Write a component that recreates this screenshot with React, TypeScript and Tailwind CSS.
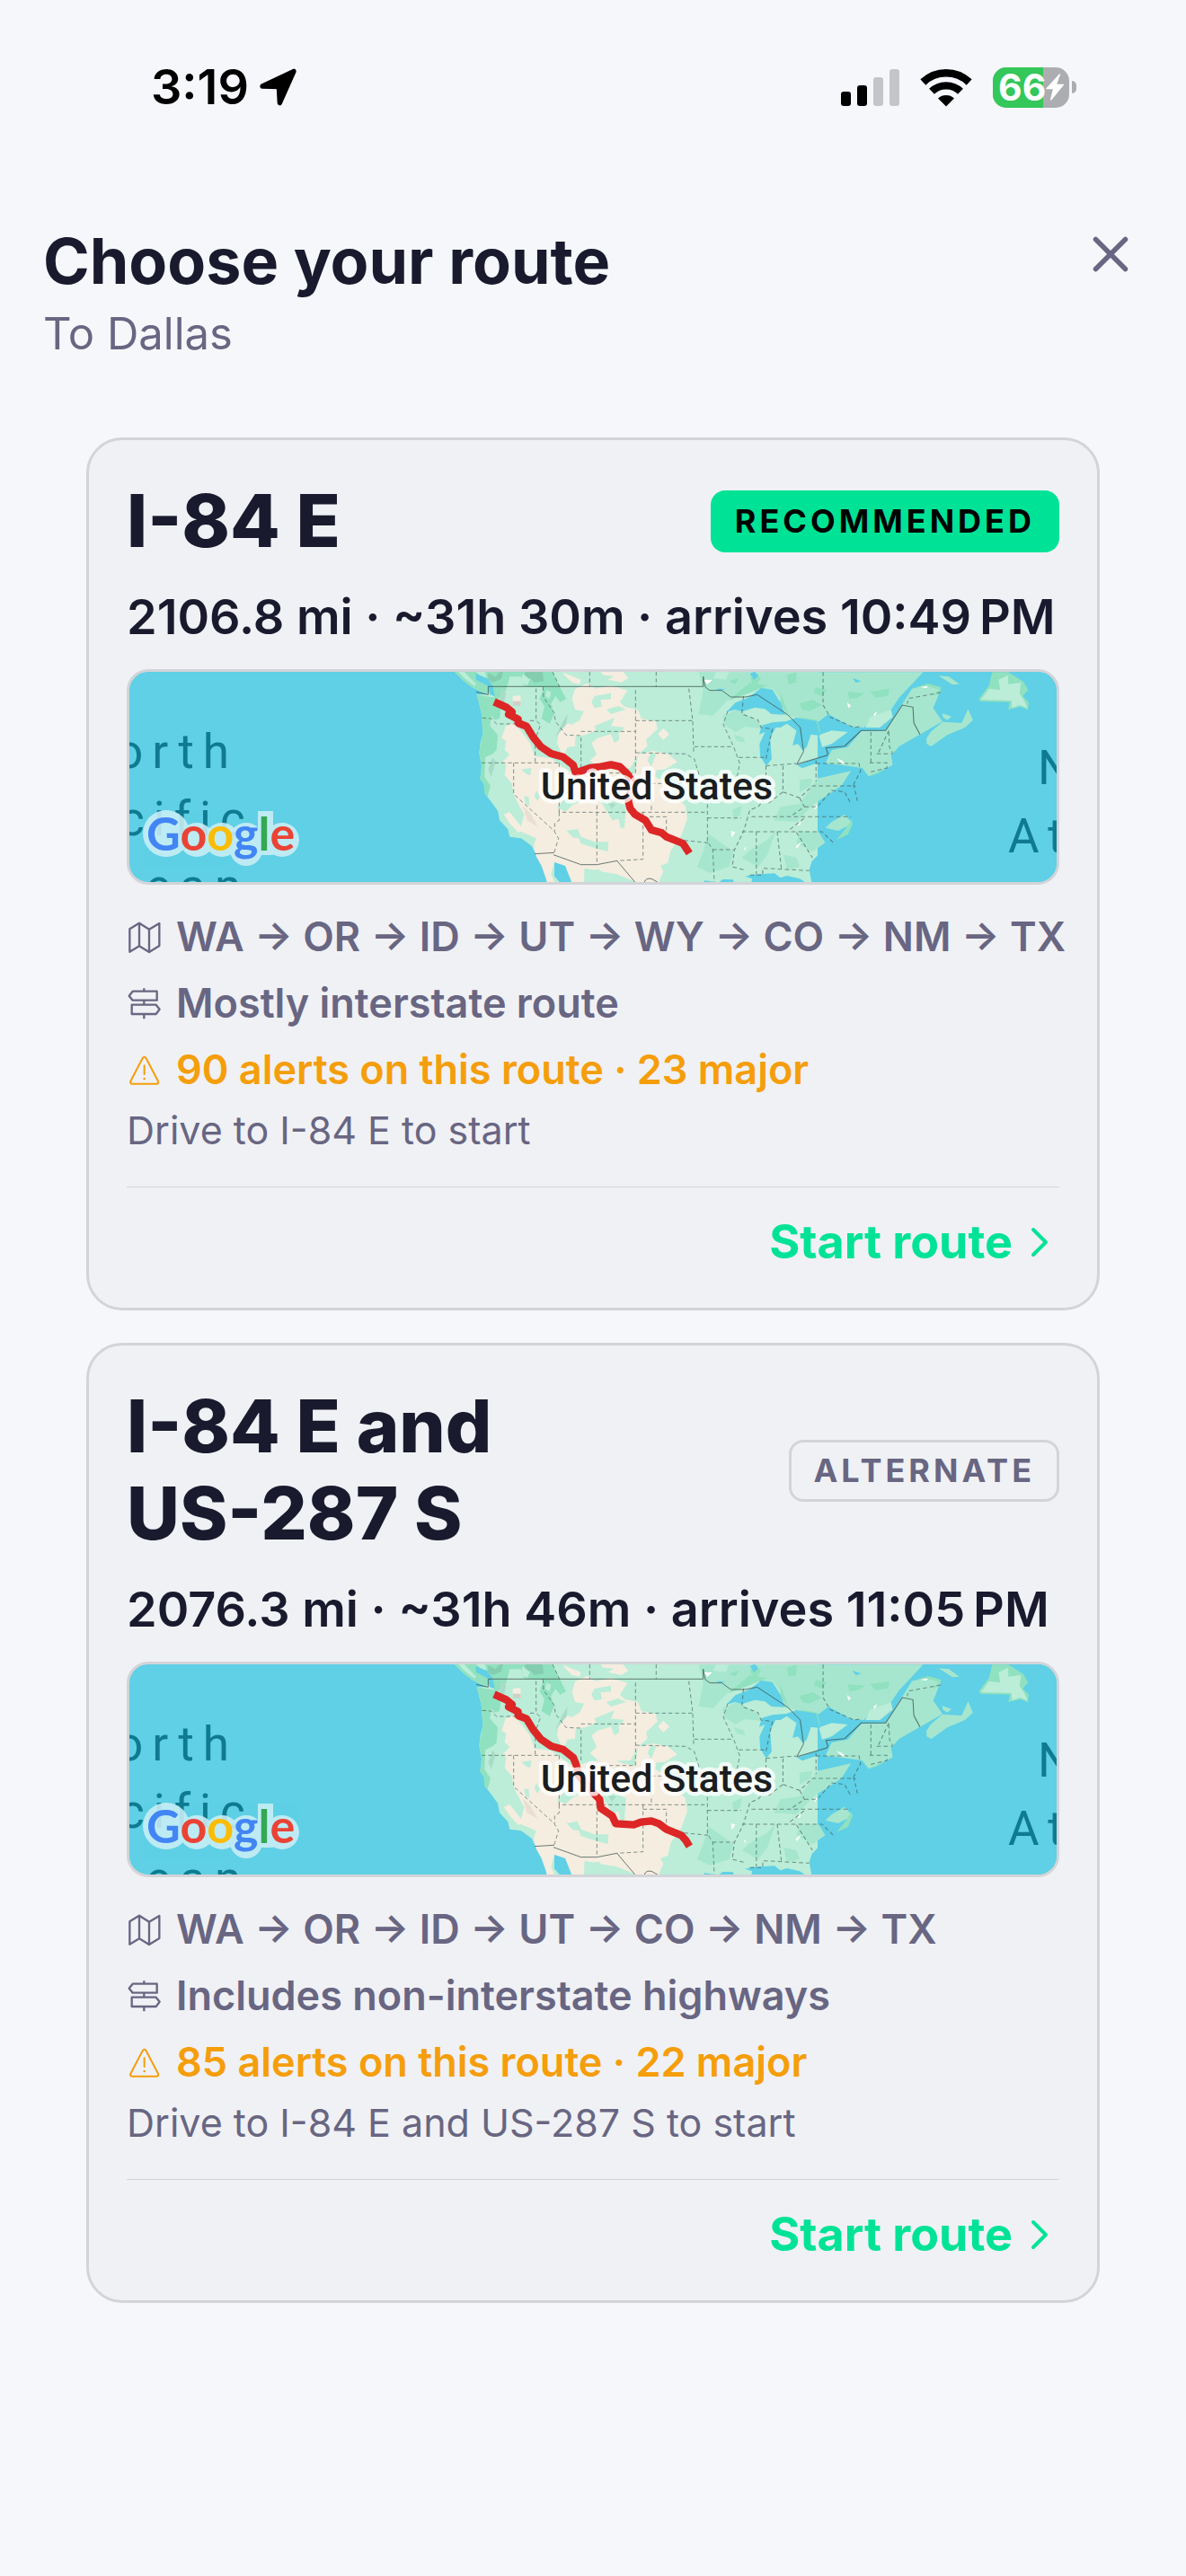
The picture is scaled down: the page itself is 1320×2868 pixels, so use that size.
import React from "react"
import { X } from "lucide-react"

type RouteType = {
    id: string
    title: string
    recommended: boolean
    summary: string
    states: string[]
    roadNote: string
    alertNote: string
    startNote: string
    line: string
}

const routes: RouteType[] = [
    {
        id: "i-84-e",
        title: "I-84 E",
        recommended: true,
        summary: "2106.8 mi · ~31h 30m · arrives 10:49\u202fPM",
        states: ["WA", "OR", "ID", "UT", "WY", "CO", "NM", "TX"],
        roadNote: "Mostly interstate route",
        alertNote: "90 alerts on this route · 23 major",
        startNote: "Drive to I-84 E to start",
        line: "M210 124 L250 142 270 158 258 166 290 182 290 195 318 206 340 242 366 274 400 297 440 308 474 335 482 361 530 345 560 342 600 334 630 341 652 362 668 385 670 410 658 455 664 480 680 500 715 520 735 552 770 562 785 575 840 597 862 630",
    },
    {
        id: "i-84-e-us-287-s",
        title: "I-84 E and US-287 S",
        recommended: false,
        summary: "2076.3 mi · ~31h 46m · arrives 11:05\u202fPM",
        states: ["WA", "OR", "ID", "UT", "CO", "NM", "TX"],
        roadNote: "Includes non-interstate highways",
        alertNote: "85 alerts on this route · 22 major",
        startNote: "Drive to I-84 E and US-287 S to start",
        line: "M210 124 L250 142 270 158 258 166 290 182 290 195 318 206 340 242 366 274 400 297 440 308 474 335 484 360 492 395 545 458 562 475 566 505 604 530 616 556 676 560 700 551 735 547 760 556 785 575 835 595 850 612 862 632",
    },
]

const StatusBar = () => (
    <div className="flex h-[62px] items-center justify-between pr-[122px] pl-[168px] text-black">
        <div className="flex items-center gap-3">
            <span className="text-[54px] leading-[62px] font-semibold">3:19</span>
            <svg viewBox="0 0 126 126" className="size-[42px]" fill="currentColor" stroke="currentColor" strokeWidth="16" strokeLinejoin="round">
                <path d="M9 60 L114 10 67 116 64 62Z" />
            </svg>
        </div>
        <div className="flex items-center gap-[23px]">
            <svg viewBox="0 0 65 42" className="h-[42px] w-[65px]">
                <rect x="0" y="26" width="11" height="16" rx="3" />
                <rect x="18" y="19" width="11" height="23" rx="3" />
                <rect x="36" y="10" width="11" height="32" rx="3" fill="#c4c5c9" />
                <rect x="54" y="1" width="11" height="41" rx="3" fill="#c4c5c9" />
            </svg>
            <svg viewBox="0 0 174 128" className="h-[43px] w-[58px]" fill="none" stroke="black">
                <path d="M10 46 A112 112 0 0 1 164 46" strokeWidth="26" />
                <path d="M39 77 A69 69 0 0 1 135 77" strokeWidth="25" />
                <path d="M87 127 L60 100 A40 40 0 0 1 114 100Z" fill="black" stroke="none" />
            </svg>
            <div className="flex items-center gap-[3px]">
                <div className="relative flex h-[45px] w-[85px] items-center overflow-hidden rounded-[15px] bg-[#acadb0] pl-1.5">
                    <span className="absolute inset-y-0 left-0 w-[56px] bg-[#34c759]" />
                    <span className="relative text-[41px] leading-[45px] font-bold text-white">66</span>
                    <svg viewBox="0 0 60 90" className="relative h-[30px] w-[20px] shrink-0" fill="white" stroke="white" strokeWidth="4" strokeLinejoin="round">
                        <path d="M46 3 L3 50 H26 L17 87 58 37 H34Z" />
                    </svg>
                </div>
                <span className="h-[14px] w-[5px] rounded-r-full bg-[#acadb0]" />
            </div>
        </div>
    </div>
)

const MapIcon = () => (
    <svg viewBox="0 0 117 117" className="size-[39px] shrink-0" fill="none" stroke="currentColor" strokeWidth="7" strokeLinejoin="round">
        <path d="M10 31 L42 11 75 32 109 12 V87 L75 108 42 88 10 107Z M42 11V88 M75 32V108" />
    </svg>
)

const SignpostIcon = () => (
    <svg viewBox="0 0 117 117" className="size-[39px] shrink-0" fill="none" stroke="currentColor" strokeWidth="7" strokeLinejoin="round">
        <path d="M20 17 H101 V47 H20 L8 32Z M17 62 H98 L110 77 98 93 H17Z M58 7V17 M58 47V62 M58 93V109" />
    </svg>
)

const WarningIcon = () => (
    <svg viewBox="0 0 117 117" className="size-[39px] shrink-0" fill="none" stroke="currentColor" strokeWidth="6" strokeLinejoin="round" strokeLinecap="round">
        <path d="M53 19 Q59 10 65 19 L105 95 Q108 104 99 104 H19 Q10 104 13 95Z M59 43V72" />
        <circle cx="59" cy="87" r="4" fill="currentColor" stroke="none" />
    </svg>
)

const ChevronIcon = () => (
    <svg viewBox="0 0 20 34" className="h-[34px] w-[20px]" fill="none" stroke="currentColor" strokeWidth="4" strokeLinecap="round" strokeLinejoin="round">
        <path d="M3 3 L17 17 3 31" />
    </svg>
)

// West half of the map uses one grid, the lakes and the Atlantic side another
const WEST = "translate(336 -8) scale(0.33333)"
const EAST = "translate(496 -13) scale(0.35714 0.33333)"

const RouteMap = ({ line, title }: { line: string; title: string }) => (
    <div className="overflow-hidden rounded-3xl border-3 border-[#d3d4d8] bg-[#5fd0e5]">
        <svg viewBox="0 0 1032 234" className="block w-full" role="img" aria-label={`Map of ${title}`}>
            {/* land */}
            <g transform={WEST}>
                <path fill="#bbedd8" d="M78 24 H1290 V726 H385 L382 700 370 670 352 640 335 605 300 580 262 575 256 550 228 520 222 488 198 455 178 430 176 400 163 382 168 340 160 295 164 262 172 230 168 165 160 130 152 100 190 100 180 97 140 78 108 54Z" />
                <path fill="#90e1bf" d="M78 24 H150 L180 50 200 90 180 97 140 78 108 54Z M153 100 L212 110 232 150 228 180 212 185 200 172 196 205 222 235 218 285 205 298 180 310 178 375 198 405 188 440 178 430 176 400 163 382 168 340 160 295 172 230 168 165Z M180 24 H405 L430 75 450 115 430 125 415 105 400 130 410 165 395 197 368 180 378 140 362 115 375 75 310 72 300 40 262 40 250 85 215 125 205 90 190 72Z" />
                <path fill="#84cdb0" d="M190 28 L215 40 228 24 240 24 234 48 205 60 190 50Z M315 24 H372 L375 55 345 60 330 45 300 60Z" />
                <path fill="#5fd0e5" d="M148 30 L185 45 205 70 212 105 195 100 190 72 150 50Z" />
                <path fill="#bbedd8" d="M90 24 L110 24 150 65 145 72 110 45Z M305 30 L330 50 320 70 300 60Z M385 85 L400 92 395 115 380 105Z" />
                <path fill="#a9dcc8" d="M235 75 L250 95 238 150 225 135Z M455 165 L450 215 415 240 440 190Z M205 310 L215 325 200 375 190 350Z" />

                {/* dry land */}
                <path fill="#f4ede0" d="M248 205 L275 195 300 222 330 262 345 305 400 312 430 335 475 365 520 352 600 340 640 355 680 362 690 300 740 288 790 298 822 325 780 350 752 352 748 375 800 400 812 440 848 470 855 515 835 570 800 620 790 662 765 672 775 690 760 726 682 726 620 700 560 690 512 680 510 726 470 726 447 672 411 660 400 700 412 726 387 726 368 672 350 640 342 605 350 580 300 558 290 560 262 530 242 500 262 492 300 540 310 500 285 455 275 432 268 395 245 370 250 335 238 325 262 300 245 285 250 255 235 245Z" />
                <path fill="#f4ede0" d="M440 26 L500 50 495 65 470 60 445 35Z M480 82 L520 62 548 80 600 70 655 86 630 125 645 140 690 150 702 180 750 190 755 215 718 250 722 272 690 300 665 345 560 348 530 320 552 300 535 262 555 245 600 232 612 262 628 250 625 232 645 210 600 205 612 178 545 205 550 220 515 235 482 240 480 272 455 275 440 310 420 262 425 230 455 195 470 200 495 185 510 155 480 150 470 115Z M565 24 H640 L658 45 635 60 590 50 610 38 575 35Z M775 212 L795 232 775 252 757 232Z M272 105 L298 103 300 135 272 135Z" />
                <path fill="#bbedd8" d="M545 105 L600 95 600 115 565 118 570 140 545 145 535 125Z M585 150 L625 138 650 150 600 165Z M452 555 L488 548 500 575 545 592 592 592 590 624 555 615 500 598 492 578 475 578Z M560 445 L600 450 650 470 645 545 632 545 625 515 605 520 580 480Z M425 470 L450 445 500 455 470 470 450 490 422 480Z M300 350 L335 345 330 370 318 365Z M310 440 L325 440 328 470 315 465Z M512 690 L560 683 598 726 512 726Z M735 290 L750 300 735 340 722 320Z M350 420 L362 440 355 455 345 440Z M480 330 L500 300 510 350 495 355Z" />
                <path fill="#cdd2c8" d="M272 122 H299 V137 H272Z" />
                <path fill="#e9dfd1" d="M305 470 L330 495 355 540 320 520Z" />
                <path fill="#a9dcc8" d="M590 462 L618 465 602 482Z" />
                <path fill="#5fd0e5" d="M411 660 L447 672 468 726 428 726 411 706Z" />
            </g>
            <g transform={EAST}>
                <path fill="#5fd0e5" d="M700 780 L737 741 730 700 738 672 760 648 800 612 850 583 864 550 860 520 868 490 885 460 878 435 895 420 905 395 920 388 990 350 985 318 1010 288 1075 245 1145 205 1120 185 1116 160 1128 130 1090 125 1140 108 1135 92 1095 84 1055 93 1020 120 985 165 1010 125 1085 38 H1568 V780Z" />
                <path fill="#a6e6cf" d="M385 40 H1085 L1010 125 985 165 940 185 900 225 860 222 790 180 760 205 690 192 655 185 640 130 615 95 565 95 475 135 430 185 385 180 400 100Z M892 237 L968 235 1018 150 1050 95 1095 84 1138 95 1128 130 1116 160 1145 205 1010 288 985 318 990 350 915 388 895 360 830 350 780 345 800 300 850 290Z" />
                <path fill="#a6e6cf" d="M460 185 L505 165 570 205 580 228 530 222 500 240 465 215Z M495 250 L525 258 530 275 505 270Z M700 400 L740 395 735 420 700 440Z M755 395 L860 370 830 420 745 480 690 540 620 535 640 490 700 480Z M840 515 L865 545 820 570 780 560 800 540Z M540 640 L600 600 625 570 600 650 570 690 520 660Z M415 580 L495 640 480 690 420 710 380 690 400 640Z M700 570 L760 575 780 610 740 640 690 610Z M490 500 L520 485 515 515 495 535Z M650 650 L690 660 700 690 660 700Z" />
                <path fill="#90e1bf" d="M700 145 L740 132 770 150 730 170 708 165Z M850 105 L905 110 880 125 855 130Z M660 50 L690 40 690 75 665 80Z M920 105 L980 95 975 120 935 125Z M750 90 L785 100 770 120 745 110Z M480 70 L510 60 500 80Z M500 115 L545 75 600 85 540 110 480 135Z M640 105 L665 180 640 150Z M700 190 L755 200 765 245 745 215Z M560 45 L580 60 560 90 545 60Z M1055 93 L1100 78 1140 90 1138 112 1110 120 1135 98 1095 86Z M862 530 L864 550 850 583 815 600 845 560Z M910 390 L985 352 940 380Z" />
                <path fill="#bbedd8" d="M905 225 L920 190 960 175 985 165 990 190 950 225Z M760 250 L800 235 850 240 800 280 770 290Z M440 40 L480 40 470 65 430 60Z" />
                <path fill="#a6e6cf" d="M1095 262 L1108 240 1145 206 1205 210 1225 163 1240 200 1215 225 1160 250 1110 288 1096 280Z M1133 52 L1165 55 1198 80 1176 82Z M1145 178 L1173 188 1160 200 1146 190Z" />
                <path fill="#90e1bf" d="M1258 130 L1290 85 1300 40 1350 40 1398 72 1412 100 1395 120 1414 140 1411 167 1390 155 1350 165 1355 140 1265 138Z" />
                <path fill="#bbedd8" d="M1265 132 L1290 95 1325 100 1320 65 1350 50 1350 80 1390 75 1385 110 1400 135 1410 160 1385 150 1362 160 1360 135Z" />
                <path fill="#fff" d="M400 65 L428 66 412 80Z M848 142 L860 152 852 160Z M930 180 L942 172 934 188Z M1075 90 L1100 86 1095 93Z M487 570 L500 575 488 592Z M815 328 L828 342 845 350 832 335Z M527 628 L533 624 530 638Z M688 622 L706 606 692 630Z M745 490 L758 482 748 500Z M693 550 L704 538 701 553Z" />

                {/* water */}
                <path fill="#5fd0e5" d="M472 173 L500 142 540 125 580 93 615 98 640 140 655 182 612 180 592 163 560 158 520 172 500 165Z M574 248 L582 218 615 208 658 204 690 192 752 203 764 252 735 248 722 290 710 302 695 280 678 285 690 235 660 212 640 225 625 225 608 262 613 330 596 353 577 320 575 280 592 240Z M692 350 L740 332 785 318 770 338 708 361Z M773 298 L830 272 854 270 850 289 800 293Z M545 45 L560 38 572 52 558 66Z M865 60 L892 70 875 76Z M440 95 L470 96 450 102Z M847 440 L862 490 872 518 850 500Z M785 558 L812 602 800 598Z M403 736 L437 741 H402Z M450 741 L460 732 492 733 495 741Z M530 722 L552 716 622 712 640 727 660 720 700 730 716 741 H550 L552 730Z" />
            </g>

            {/* state and country lines */}
            <g fill="none" stroke="#3c4f4d" strokeOpacity="0.75" strokeWidth="3">
                <path transform={WEST} d="M150 91 L190 100 V73 H908 V40 L915 75 930 86 970 86 1000 108 1050 108 1088 100 1190 167 1232 210 1243 290 1222 330 M345 632 L410 628 M408 635 L500 668 H553 L620 655 680 726 M712 726 Q716 712 735 715 L755 726" />
                <path transform={EAST} d="M690 348 L785 318 788 312 782 293 840 287 892 235 H968 L1020 150 1053 157 1056 210 1075 248" />
                <g strokeDasharray="13 9" strokeOpacity="0.6">
                    <path transform={WEST} d="M170 178 L200 180 218 198 285 198 M330 187 H350 M350 80 V187 L365 200 347 250 V328 M168 328 H427 M275 328 V432 L410 555 425 580 410 628 M427 328 V493 H922 M427 493 V520 L412 530 V555 M553 470 V668 M373 73 L375 110 410 160 415 190 450 235 500 237 V350 M500 223 H682 M682 85 V362 H580 M682 187 H873 M682 294 L850 298 878 315 895 370 M860 80 L873 187 876 290 M878 274 H1010 M529 24 V73 M751 24 V73 M405 24 L428 73 M735 397 H900 M735 450 V493 M707 508 H785 V560 M707 493 V650 L620 655 M845 587 L925 595 M922 400 V590 L940 618 945 726 M922 512 H1035 M940 618 H1010 M990 155 L975 200 1010 275 1030 330 1020 380" />
                    <path transform={EAST} d="M773 40 V150 L795 190 870 225 895 220 M595 353 L690 345 M510 325 H595 M595 353 V460 L570 490 545 500 525 573 497 633 490 690 525 700 M648 353 V440 L600 480 M648 440 L700 460 740 420 H875 M751 335 V405 M751 345 H885 L890 370 868 415 M715 490 H755 L800 435 840 440 860 480 M550 523 H860 M520 573 H770 L805 610 M565 573 V715 M630 573 L643 695 M690 575 L740 660 M545 718 H585 V695 L730 703 M670 565 L720 523 M700 460 L715 490 670 523 M922 240 V345 M978 235 L945 310 M978 240 L980 290 990 310 M940 313 H990 M918 343 H972 V360 L915 375 M868 415 L880 470 M525 120 L520 180 570 200 580 225 615 230 595 330 M1140 108 L1040 128 1035 145" />
                </g>
            </g>

            <path transform={WEST} d={line} fill="none" stroke="#dd2626" strokeWidth="25" strokeLinejoin="round" />

            <g className="font-[Roboto,sans-serif] text-[53px] tracking-[10px]" fill="#0f7a90">
                <text x="-15" y="107">orth</text>
                <text x="-11" y="182">cific</text>
                <text x="18" y="257">ean</text>
                <text x="1011" y="125">N</text>
                <text x="978" y="201">At</text>
            </g>
            <text
                x="587"
                y="142"
                textAnchor="middle"
                className="font-[Roboto,sans-serif] text-[43px] font-medium [paint-order:stroke]"
                fill="#1b1d1f"
                stroke="#ffffff"
                strokeOpacity="0.8"
                strokeWidth="9"
                strokeLinejoin="round"
            >
                United States
            </text>

            {/* pale backing that keeps the logo readable over the labels */}
            <g fill="#cbeef6" opacity="0.88">
                <circle cx="41" cy="180" r="26" />
                <circle cx="75" cy="187" r="19" />
                <circle cx="103" cy="187" r="19" />
                <circle cx="130" cy="187" r="19" />
                <circle cx="130" cy="198" r="18" />
                <rect x="143" y="155" width="17" height="49" />
                <circle cx="170" cy="187" r="19" />
            </g>
            <text x="19" y="199" className="font-[Lato,sans-serif] text-[52px] font-bold">
                <tspan fill="#4285f4">G</tspan>
                <tspan fill="#ea4335">o</tspan>
                <tspan fill="#fbbc04">o</tspan>
                <tspan fill="#4285f4">g</tspan>
                <tspan fill="#34a853">l</tspan>
                <tspan fill="#ea4335">e</tspan>
            </text>
        </svg>
    </div>
)

const RouteBadge = ({ recommended }: { recommended: boolean }) =>
    recommended ? (
        <span className="rounded-2xl bg-[#00e396] px-[27px] py-3 text-[36px] leading-[45px] font-bold tracking-[4px] text-black">RECOMMENDED</span>
    ) : (
        <span className="rounded-2xl border-3 border-[#d3d4d8] px-6 py-[9px] text-[36px] leading-[45px] font-bold tracking-[4px]">ALTERNATE</span>
    )

const RouteCard = ({ route }: { route: RouteType }) => (
    <li className="rounded-[40px] border-3 border-[#d3d4d8] bg-[#f0f1f5] p-[42px]">
        <div className="flex items-center justify-between gap-6">
            <h2 className="max-w-[460px] text-[81px] leading-[97px] font-extrabold text-[#1a1a2e]">{route.title}</h2>
            <RouteBadge recommended={route.recommended} />
        </div>
        <p className="mt-6 text-[54px] leading-[68px] font-semibold whitespace-nowrap text-[#1a1a2e]">{route.summary}</p>
        <div className="mt-6">
            <RouteMap line={route.line} title={route.title} />
        </div>
        <div className="mt-6 flex flex-col gap-1.5 text-[45px] leading-[68px] font-semibold whitespace-nowrap">
            <p className="flex items-center gap-4">
                <MapIcon />
                {route.states.join(" → ")}
            </p>
            <p className="flex items-center gap-4">
                <SignpostIcon />
                {route.roadNote}
            </p>
            <p className="flex items-center gap-4 text-[#f59e0b]">
                <WarningIcon />
                {route.alertNote}
            </p>
            <p className="text-[43px] leading-[55px] font-normal">{route.startNote}</p>
        </div>
        <div className="mt-[35px] flex justify-end border-t border-[#d3d4d8] pt-[30px] pr-3">
            <button type="button" className="flex cursor-pointer items-center gap-5 text-[52px] leading-[62px] font-bold text-[#00e396]">
                Start route
                <ChevronIcon />
            </button>
        </div>
    </li>
)

const App = () => {
    return (
        <div className="min-h-screen bg-[#f6f7fb] pt-[66px] pb-24 font-[Inter,sans-serif] text-[#686682]">
            <StatusBar />
            <header className="mt-[119px] flex items-start justify-between px-12">
                <div>
                    <h1 className="text-[70px] leading-[88px] font-bold text-[#1a1a2e]">Choose your route</h1>
                    <p className="mt-1.5 text-[49px] leading-[62px]">To Dallas</p>
                </div>
                <button type="button" aria-label="Close" className="flex size-[72px] cursor-pointer items-center justify-center">
                    <X className="size-[66px]" strokeWidth={2} />
                </button>
            </header>
            <ul className="mx-24 mt-[84px] flex flex-col gap-9">
                {routes.map((route) => (
                    <RouteCard key={route.id} route={route} />
                ))}
            </ul>
        </div>
    )
}

export default App
